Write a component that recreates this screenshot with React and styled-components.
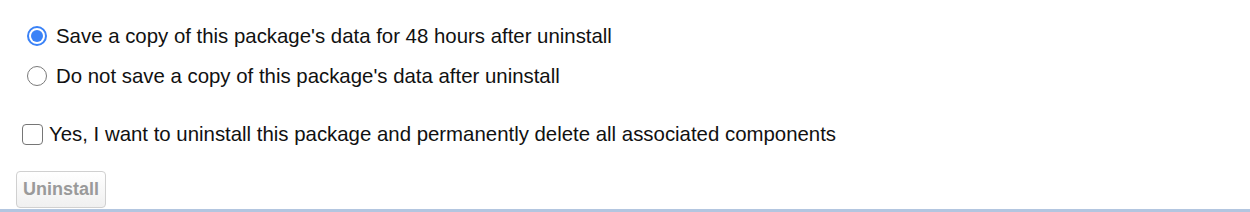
import React, { useState } from "react";
import styled, { createGlobalStyle } from "styled-components";

const GlobalStyle = createGlobalStyle`
  html, body {
    margin: 0;
    padding: 0;
    background: #ffffff;
  }
  body {
    font-family: "Liberation Sans", Arial, sans-serif;
    color: #111;
  }
`;

const Page = styled.div`
  width: 1250px;
  height: 212px;
  box-sizing: border-box;
  border-bottom: 3px solid #b3c6e0;
  display: flex;
  flex-direction: column;
  padding: 19px 0 0 16px;
`;

const Options = styled.div`
  display: flex;
  flex-direction: column;
  gap: 6px;
  padding-left: 11px;
`;

const OptionRow = styled.label`
  display: flex;
  align-items: center;
  gap: 9px;
  font-size: 20.4px;
  line-height: 34px;
  cursor: pointer;
`;

const Radio = styled.span`
  flex: none;
  width: 20px;
  height: 20px;
  box-sizing: border-box;
  border-radius: 50%;
  border: ${(p) => (p.$checked ? "2px solid #3a82f7" : "1.5px solid #7a7a7a")};
  background: #fff;
  display: flex;
  align-items: center;
  justify-content: center;
  &::after {
    content: "";
    width: 12px;
    height: 12px;
    border-radius: 50%;
    background: ${(p) => (p.$checked ? "#3a82f7" : "transparent")};
  }
`;

const Confirm = styled.label`
  display: flex;
  align-items: center;
  gap: 6px;
  margin-top: 24px;
  padding-left: 6px;
  font-size: 20.4px;
  line-height: 34px;
  cursor: pointer;
`;

const Box = styled.span`
  flex: none;
  width: 21px;
  height: 21px;
  box-sizing: border-box;
  border: 1.5px solid #767676;
  border-radius: 4px;
  background: #fff;
`;

const Actions = styled.div`
  margin-top: 20px;
`;

const Button = styled.button`
  height: 37px;
  width: 90px;
  padding: 0;
  border: 1px solid #d0d0d0;
  border-radius: 4px;
  background: linear-gradient(#ffffff, #f0f0f0);
  font-family: "Liberation Sans", Arial, sans-serif;
  font-weight: bold;
  font-size: 18px;
  color: #9a9a9a;
`;

export default function App() {
  const [keep, setKeep] = useState(true);

  return (
    <>
      <GlobalStyle />
      <Page>
        <Options>
          <OptionRow onClick={() => setKeep(true)}>
            <Radio $checked={keep} />
            Save a copy of this package's data for 48 hours after uninstall
          </OptionRow>
          <OptionRow onClick={() => setKeep(false)}>
            <Radio $checked={!keep} />
            Do not save a copy of this package's data after uninstall
          </OptionRow>
        </Options>
        <Confirm>
          <Box />
          Yes, I want to uninstall this package and permanently delete all associated components
        </Confirm>
        <Actions>
          <Button disabled>Uninstall</Button>
        </Actions>
      </Page>
    </>
  );
}
